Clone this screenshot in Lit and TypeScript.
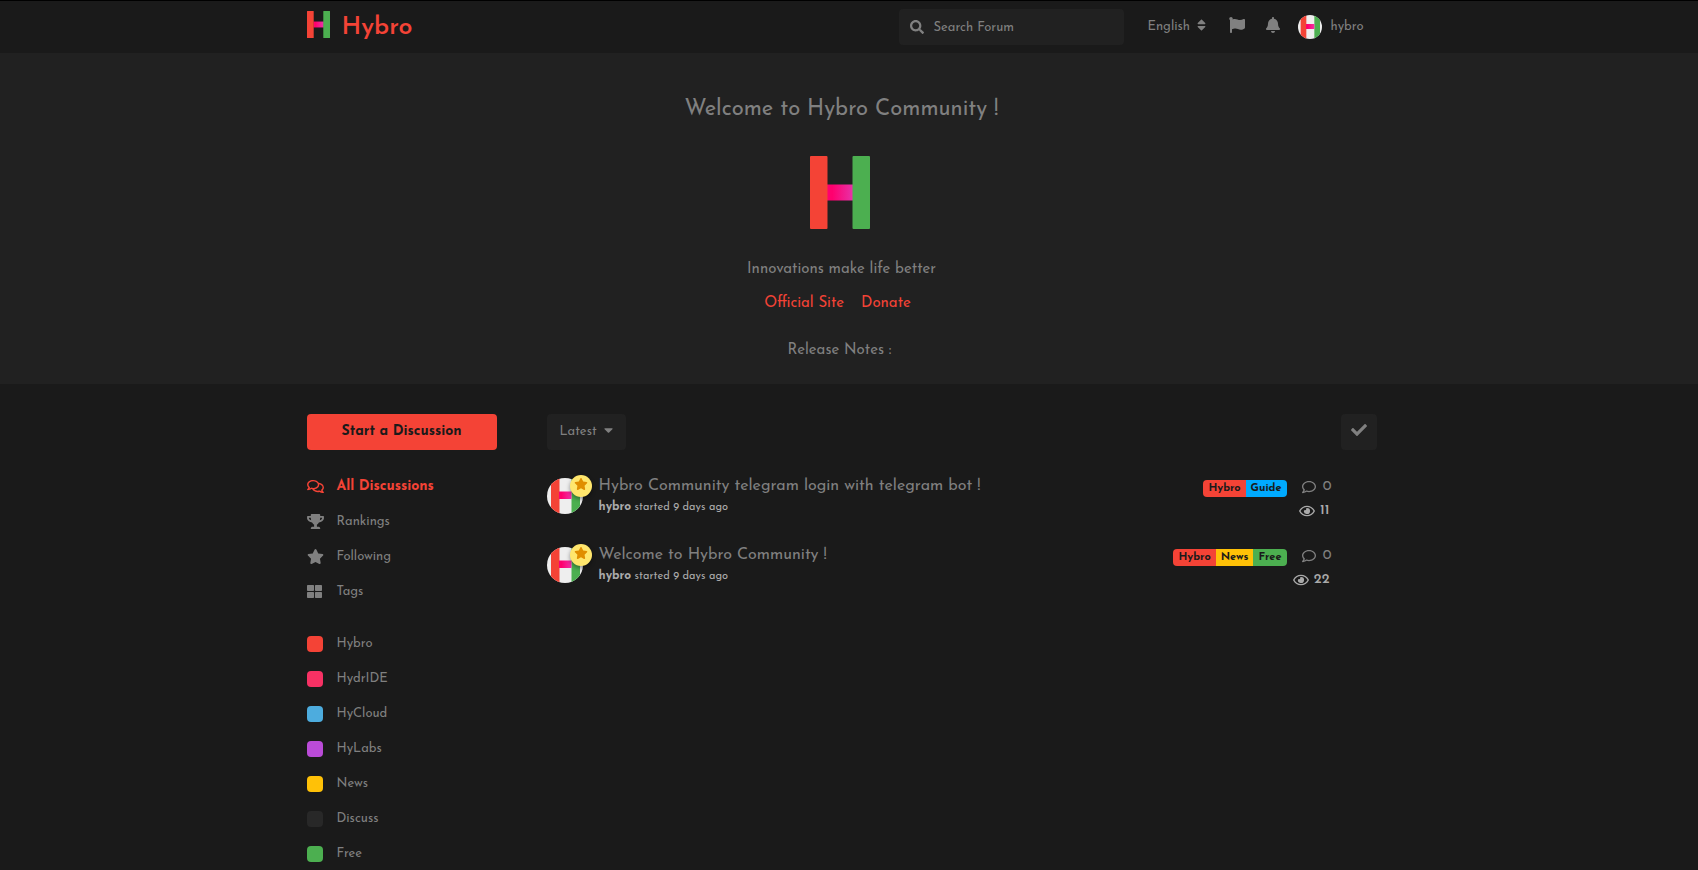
import { LitElement, html, css } from "lit";
import { customElement, property } from "lit/decorators.js";

const ICONS: Record<string, string> = {
  search: "M505 442.700L405.300 343c-4.500-4.500-10.600-7-17-7H372c27.600-35.300 44-79.700 44-128C416 93.100 322.900 0 208 0S0 93.100 0 208s93.100 208 208 208c48.300 0 92.700-16.400 128-44v16.300c0 6.400 2.500 12.500 7 17l99.700 99.700c9.400 9.400 24.600 9.400 33.900 0l28.300-28.300c9.400-9.400 9.400-24.600.1-34zM208 336c-70.700 0-128-57.200-128-128 0-70.700 57.200-128 128-128 70.700 0 128 57.200 128 128 0 70.700-57.200 128-128 128z",
  sort: "M41 288h238c21.400 0 32.100 25.900 17 41L177 448c-9.400 9.400-24.600 9.400-33.900 0L24 329c-15.100-15.100-4.400-41 17-41zm255-105L177 64c-9.400-9.400-24.600-9.400-33.900 0L24 183c-15.100 15.100-4.400 41 17 41h238c21.400 0 32.100-25.900 17-41z",
  flag: "M349.565 98.783C295.978 98.783 251.721 64 184.348 64c-24.955 0-47.309 4.384-68.045 12.013a55.947 55.947 0 0 0 3.586-23.562C118.117 24.015 94.806 1.206 66.338.048 34.345-1.254 8 24.296 8 56c0 19.026 9.497 35.825 24 45.945V488c0 13.255 10.745 24 24 24h16c13.255 0 24-10.745 24-24v-94.400c28.311-12.064 63.582-22.122 114.435-22.122 53.588 0 97.844 34.783 165.217 34.783 48.169 0 86.667-16.294 122.505-40.858C506.840 359.452 512 349.571 512 339.045v-243.100c0-23.393-24.269-38.870-45.485-29.016-34.338 15.948-76.454 31.854-116.950 31.854z",
  bell: "M224 512c35.320 0 63.970-28.650 63.970-64H160.030c0 35.350 28.650 64 63.970 64zm215.390-149.710c-19.320-20.760-55.470-51.990-55.470-154.290 0-77.700-54.480-139.900-127.940-155.160V32c0-17.670-14.320-32-31.980-32s-31.980 14.330-31.980 32v20.840C118.560 68.100 64.080 130.300 64.080 208c0 102.300-36.150 133.530-55.470 154.290-6 6.450-8.660 14.160-8.610 21.710.11 16.400 12.980 32 32.100 32h383.800c19.120 0 32-15.600 32.100-32 .05-7.550-2.610-15.270-8.610-21.710z",
  comments: "M532 386.200c27.500-27.100 44-61.100 44-98.200 0-80-76.500-146.100-176.200-157.900C368.300 72.500 294.300 32 208 32 93.100 32 0 103.600 0 192c0 37 16.500 71 44 98.200-15.300 30.700-37.300 54.500-37.700 54.900-6.300 6.700-8.100 16.500-4.400 25 3.600 8.500 12 14 21.200 14 53.500 0 96.700-20.200 125.200-38.800 9.200 2.100 18.700 3.700 28.400 4.900C208.100 407.600 281.800 448 368 448c20.800 0 40.800-2.400 59.800-6.800C456.300 459.700 499.400 480 553 480c9.200 0 17.500-5.500 21.200-14 3.600-8.500 1.900-18.300-4.400-25-.4-.3-22.500-24.100-37.800-54.800zm-392.800-92.300L122.100 305c-14.100 9.100-28.500 16.300-43.100 21.400 2.700-4.700 5.400-9.700 8-14.800l15.500-31.100L77.700 256C64.200 242.600 48 220.700 48 192c0-60.700 73.300-112 160-112s160 51.300 160 112-73.300 112-160 112c-16.500 0-33-1.900-49-5.600l-19.800-4.500zM498.300 352l-24.700 24.400 15.500 31.100c2.600 5.100 5.300 10.100 8 14.800-14.600-5.100-29-12.300-43.100-21.400l-17.100-11.100-19.900 4.600c-16 3.700-32.500 5.600-49 5.600-54 0-102.200-20.100-131.300-49.700C338 339.500 416 272.900 416 192c0-3.400-.4-6.700-.7-10C479.700 196.500 528 238.800 528 288c0 28.700-16.200 50.600-29.700 64z",
  comment: "M256 32C114.600 32 0 125.100 0 240c0 47.600 19.900 91.200 52.900 126.300C38 405.700 7 439.100 6.500 439.500c-6.600 7-8.400 17.200-4.600 26S14.400 480 24 480c61.500 0 110-25.700 139.100-46.300C192 442.800 223.200 448 256 448c141.400 0 256-93.100 256-208S397.400 32 256 32zm0 368c-26.700 0-53.100-4.100-78.400-12.100l-22.700-7.200-19.500 13.800c-14.300 10.100-33.900 21.400-57.500 29 7.300-12.100 14.400-25.700 19.900-40.200l10.600-28.100-20.600-21.800C69.700 314.100 48 282.200 48 240c0-88.200 93.300-160 208-160s208 71.800 208 160-93.300 160-208 160z",
  trophy: "M552 64H448V24c0-13.300-10.700-24-24-24H152c-13.300 0-24 10.700-24 24v40H24C10.700 64 0 74.700 0 88v56c0 35.700 22.500 72.400 61.900 100.700 31.500 22.700 69.800 37.100 110 41.700C203.300 338.500 240 360 240 360v72h-48c-35.300 0-64 20.700-64 56v12c0 6.600 5.400 12 12 12h296c6.600 0 12-5.400 12-12v-12c0-35.300-28.700-56-64-56h-48v-72s36.700-21.500 68.100-73.600c40.300-4.600 78.600-19 110-41.700 39.300-28.300 61.900-65 61.900-100.700V88c0-13.300-10.700-24-24-24zM99.300 192.800C74.900 175.200 64 155.600 64 144v-16h64.200c1 32.600 5.800 61.200 12.800 86.200-15.100-5.200-29.200-12.400-41.700-21.400zM512 144c0 16.100-17.700 36.100-35.300 48.800-12.500 9-26.700 16.200-41.800 21.400 7-25 11.800-53.600 12.800-86.200H512v16z",
  star: "M259.300 17.800L194 150.200 47.900 171.500c-26.200 3.800-36.700 36.100-17.700 54.600l105.700 103-25 145.500c-4.500 26.300 23.200 46 46.400 33.700L288 439.600l130.700 68.700c23.200 12.200 50.900-7.400 46.400-33.700l-25-145.500 105.700-103c19-18.500 8.500-50.800-17.700-54.600L382 150.200 316.700 17.800c-11.700-23.600-45.600-23.900-57.400 0z",
  large: "M296 32h192c13.255 0 24 10.745 24 24v160c0 13.255-10.745 24-24 24H296c-13.255 0-24-10.745-24-24V56c0-13.255 10.745-24 24-24zm-80 0H24C10.745 32 0 42.745 0 56v160c0 13.255 10.745 24 24 24h192c13.255 0 24-10.745 24-24V56c0-13.255-10.745-24-24-24zM0 296v160c0 13.255 10.745 24 24 24h192c13.255 0 24-10.745 24-24V296c0-13.255-10.745-24-24-24H24c-13.255 0-24 10.745-24 24zm296 184h192c13.255 0 24-10.745 24-24V296c0-13.255-10.745-24-24-24H296c-13.255 0-24 10.745-24 24v160c0 13.255 10.745 24 24 24z",
  caret: "M31.300 192h257.300c17.800 0 26.700 21.500 14.100 34.100L174.100 354.800c-7.800 7.800-20.500 7.800-28.300 0L17.200 226.100C4.600 213.500 13.500 192 31.300 192z",
  check: "M173.898 439.404l-166.400-166.400c-9.997-9.997-9.997-26.206 0-36.204l36.203-36.204c9.997-9.998 26.207-9.998 36.204 0L192 312.690 432.095 72.596c9.997-9.997 26.207-9.997 36.204 0l36.203 36.204c9.997 9.997 9.997 26.206 0 36.204l-294.400 294.401c-9.998 9.997-26.207 9.997-36.204-.001z",
  eye: "M288 144a110.940 110.940 0 0 0-31.240 5 55.400 55.400 0 0 1 7.240 27 56 56 0 0 1-56 56 55.400 55.400 0 0 1-27-7.240A111.710 111.710 0 1 0 288 144zm284.520 97.400C518.290 135.590 410.930 64 288 64S57.680 135.640 3.480 241.410a32.350 32.350 0 0 0 0 29.190C57.710 376.410 165.070 448 288 448s230.320-71.640 284.520-177.410a32.350 32.350 0 0 0 0-29.190zM288 400c-98.650 0-189.090-55-237.930-144C98.910 167 189.340 112 288 112s189.090 55 237.930 144C477.100 345 386.660 400 288 400z",
};

const ICON_WIDTHS: Record<string, number> = {
  sort: 320, bell: 448, comments: 576, trophy: 576, star: 576, caret: 320, eye: 576,
};

const icon = (name: string, size: number) => {
  const units = ICON_WIDTHS[name] ?? 512;
  return html`<svg width=${Math.round((size * units) / 512)} height=${size} viewBox="0 0 ${units} 512" fill="currentColor" aria-hidden="true"><path d=${ICONS[name]}></path></svg>`;
};

const mark = (width: number, height: number) => html`
  <svg width=${width} height=${height} viewBox="0 0 60 73" preserveAspectRatio="none" role="img" aria-label="Hybro">
    <defs>
      <linearGradient id="bar" x1="0" x2="1" y1="0" y2="0">
        <stop offset="0.2" stop-color="#ff006e"></stop>
        <stop offset="1" stop-color="#e535ab"></stop>
      </linearGradient>
    </defs>
    <rect x="17" y="28.500" width="27" height="16" fill="url(#bar)"></rect>
    <rect width="17.500" height="73" rx="1" fill="#f44336"></rect>
    <rect x="42.500" width="17.500" height="73" rx="1" fill="#4caf50"></rect>
  </svg>`;

@customElement("user-avatar")
export class UserAvatar extends LitElement {
  @property({ type: Number }) size = 36;

  static styles = css`
    :host { display: block; flex: none; }
    svg { display: block; border-radius: 50%; }
  `;

  render() {
    return html`<svg width=${this.size} height=${this.size} viewBox="0 0 36 36" role="img" aria-label="hybro">
      <defs>
        <linearGradient id="link" x1="0" x2="1" y1="0" y2="0">
          <stop offset="0.2" stop-color="#ff006e"></stop>
          <stop offset="1" stop-color="#f032a8"></stop>
        </linearGradient>
      </defs>
      <rect width="36" height="36" fill="#eee"></rect>
      <rect x="4" width="8.500" height="36" fill="#f44336"></rect>
      <rect x="24.500" width="8.500" height="36" fill="#4caf50"></rect>
      <rect x="12" y="13.500" width="12.500" height="7.500" fill="url(#link)"></rect>
    </svg>`;
  }
}

interface Tag { name: string; color: string; }
interface Discussion { title: string; tags: Tag[]; replies: number; views: number; }

const HYBRO: Tag = { name: "Hybro", color: "#f44336" };
const NEWS: Tag = { name: "News", color: "#ffc107" };
const FREE: Tag = { name: "Free", color: "#4caf50" };

const TAGS: Tag[] = [
  HYBRO,
  { name: "HydrIDE", color: "#f73164" },
  { name: "HyCloud", color: "#4dacde" },
  { name: "HyLabs", color: "#ba4bd8" },
  NEWS,
  { name: "Discuss", color: "#282828" },
  FREE,
];

const NAV = [
  { name: "All Discussions", icon: "comments", active: true },
  { name: "Rankings", icon: "trophy", active: false },
  { name: "Following", icon: "star", active: false },
  { name: "Tags", icon: "large", active: false },
];

const DISCUSSIONS: Discussion[] = [
  { title: "Hybro Community telegram login with telegram bot !", tags: [HYBRO, { name: "Guide", color: "#00aaff" }], replies: 0, views: 11 },
  { title: "Welcome to Hybro Community !", tags: [HYBRO, NEWS, FREE], replies: 0, views: 22 },
];

@customElement("app-root")
export class AppRoot extends LitElement {
  static styles = css`
    :host {
      display: block;
      height: 100vh;
      background: #1a1a1a;
      color: #808080;
      font: 13px/20px "Josefin Sans", Lato, sans-serif;
      overflow: hidden;
    }
    *, *::before, *::after { box-sizing: border-box; }
    a { color: inherit; text-decoration: none; }
    button, input, select { font: inherit; color: inherit; border: 0; margin: 0; }
    button { cursor: pointer; }
    svg { display: block; flex: none; }
    h1, h3, p, ul { margin: 0; padding: 0; }
    ul { list-style: none; }
    .page { padding-right: 15px; }
    .container { width: 100%; max-width: 1100px; margin: 0 auto; padding: 0 15px; }

    .header { border-top: 1px solid #000; padding-right: 15px; }
    .header-row { display: flex; align-items: center; height: 52px; }
    .brand { display: flex; align-items: center; gap: 12px; color: #f44336; font-size: 25px; line-height: 32px; font-weight: 600; margin-right: auto; }
    .brand svg { margin-bottom: 5px; }
    .brand span { padding-top: 2px; }
    .search { display: flex; align-items: center; gap: 9px; width: 225px; height: 36px; padding: 0 11px; border-radius: 4px; background: #212121; }
    .search input { flex: 1; min-width: 0; padding: 2px 0 0; background: none; outline: none; }
    .search input::placeholder { color: #808080; opacity: 1; }
    .locale { display: flex; align-items: center; gap: 7px; margin-left: 23px; }
    .locale select { appearance: none; background: none; padding: 0; }
    .locale svg, .select-box svg { margin-bottom: 4px; }
    .icon-button { display: flex; background: none; padding: 0 0 4px; }
    .flags { margin-left: 23px; }
    .alerts { margin-left: 21px; }
    .session { display: flex; align-items: center; gap: 8px; margin: 0 13px 0 18px; }

    .hero { background: #212121; padding: 41px 15px 23px 0; text-align: center; font-size: 15px; }
    .hero h1 { font-size: 22px; line-height: 32px; font-weight: 400; }
    .hero-mark { display: flex; justify-content: center; margin: 30px 0 31px; padding-right: 4px; }
    .hero-links { display: flex; justify-content: center; gap: 17px; margin: 14px 0 27px; padding-right: 8px; color: #f44336; }
    .hero-notes { padding-right: 4px; }

    .main { display: grid; grid-template-columns: 190px minmax(0, 1fr); column-gap: 50px; padding-top: 30px; }
    .start { width: 100%; height: 36px; border-radius: 4px; background: #f44336; color: #1a1a1a; font-size: 14px; font-weight: 700; }
    .nav { margin-top: 19px; }
    .nav a { display: flex; align-items: center; gap: 14px; height: 35px; }
    .nav .active { color: #f44336; font-size: 14px; font-weight: 700; }
    .slot { display: flex; width: 16px; }
    .tags { margin-top: 17px; }
    .swatch { width: 16px; height: 16px; border-radius: 4px; }

    .toolbar { display: flex; justify-content: space-between; }
    .select-box { display: flex; align-items: center; gap: 6px; height: 36px; padding: 0 13px; border-radius: 4px; background: #212121; }
    .select-box select { appearance: none; background: none; padding: 0; }
    .mark-read { display: grid; place-items: center; width: 36px; height: 36px; padding: 0 0 4px; border-radius: 4px; background: #212121; }
    .list { margin-top: 24px; }
    .item { display: grid; grid-template-columns: 36px minmax(0, 1fr) auto auto; height: 69px; align-items: start; }
    .author { position: relative; margin-top: 4px; }
    .badge { position: absolute; top: -3px; left: 23px; display: grid; place-items: center; width: 22px; height: 22px; padding-bottom: 4px; border-radius: 50%; background: #ffe66d; color: #e08e00; box-shadow: 0 2px 4px #0006; }
    .content { padding-left: 16px; }
    .content h3 { font-size: 16px; line-height: 25px; font-weight: 400; }
    .content p { font-size: 11px; line-height: 16px; color: #aaa; }
    .content b { font-size: 12px; }
    .labels { display: flex; margin-top: 6px; border-radius: 4px; overflow: hidden; }
    .labels a { padding: 0 5px; font-size: 11px; line-height: 17px; font-weight: 700; color: #1a1a1a; }
    .stats { display: grid; justify-items: end; gap: 4px; width: 45px; margin-right: 45px; padding-top: 3px; font-size: 14px; }
    .stat { display: flex; align-items: center; gap: 7px; }
    .views { gap: 5px; padding-right: 2px; color: #aaa; font-weight: 600; }
  `;

  render() {
    return html`
      <header class="header">
        <div class="container header-row">
          <a class="brand" href="#">${mark(23, 27)}<span>Hybro</span></a>
          <label class="search">${icon("search", 14)}<input type="search" placeholder="Search Forum" aria-label="Search Forum" /></label>
          <label class="locale"><select aria-label="Language"><option>English</option></select>${icon("sort", 14)}</label>
          <button class="icon-button flags" aria-label="Flags">${icon("flag", 16)}</button>
          <button class="icon-button alerts" aria-label="Notifications">${icon("bell", 16)}</button>
          <a class="session" href="#"><user-avatar size="24"></user-avatar>hybro</a>
        </div>
      </header>
      <section class="hero">
        <h1>Welcome to Hybro Community !</h1>
        <div class="hero-mark">${mark(60, 73)}</div>
        <p>Innovations make life better</p>
        <div class="hero-links"><a href="#">Official Site</a><a href="#">Donate</a></div>
        <p class="hero-notes">Release Notes :</p>
      </section>
      <div class="page">
        <div class="container main">
          <aside>
            <button class="start">Start a Discussion</button>
            <nav class="nav">
              ${NAV.map((n) => html`<a class=${n.active ? "active" : ""} href="#"><span class="slot">${icon(n.icon, 15)}</span>${n.name}</a>`)}
              <div class="tags">
                ${TAGS.map((t) => html`<a href="#"><span class="swatch" style="background:${t.color}"></span>${t.name}</a>`)}
              </div>
            </nav>
          </aside>
          <main>
            <div class="toolbar">
              <label class="select-box"><select aria-label="Sort"><option>Latest</option></select>${icon("caret", 14)}</label>
              <button class="mark-read" aria-label="Mark all as read">${icon("check", 16)}</button>
            </div>
            <ul class="list">
              ${DISCUSSIONS.map((d) => html`
                <li class="item">
                  <div class="author"><user-avatar size="36"></user-avatar><span class="badge">${icon("star", 12)}</span></div>
                  <div class="content"><h3><a href="#">${d.title}</a></h3><p><b>hybro</b> started 9 days ago</p></div>
                  <div class="labels">${d.tags.map((t) => html`<a href="#" style="background:${t.color}">${t.name}</a>`)}</div>
                  <div class="stats">
                    <span class="stat">${icon("comment", 14)}${d.replies}</span>
                    <span class="stat views">${icon("eye", 14)}${d.views}</span>
                  </div>
                </li>`)}
            </ul>
          </main>
        </div>
      </div>
    `;
  }
}
